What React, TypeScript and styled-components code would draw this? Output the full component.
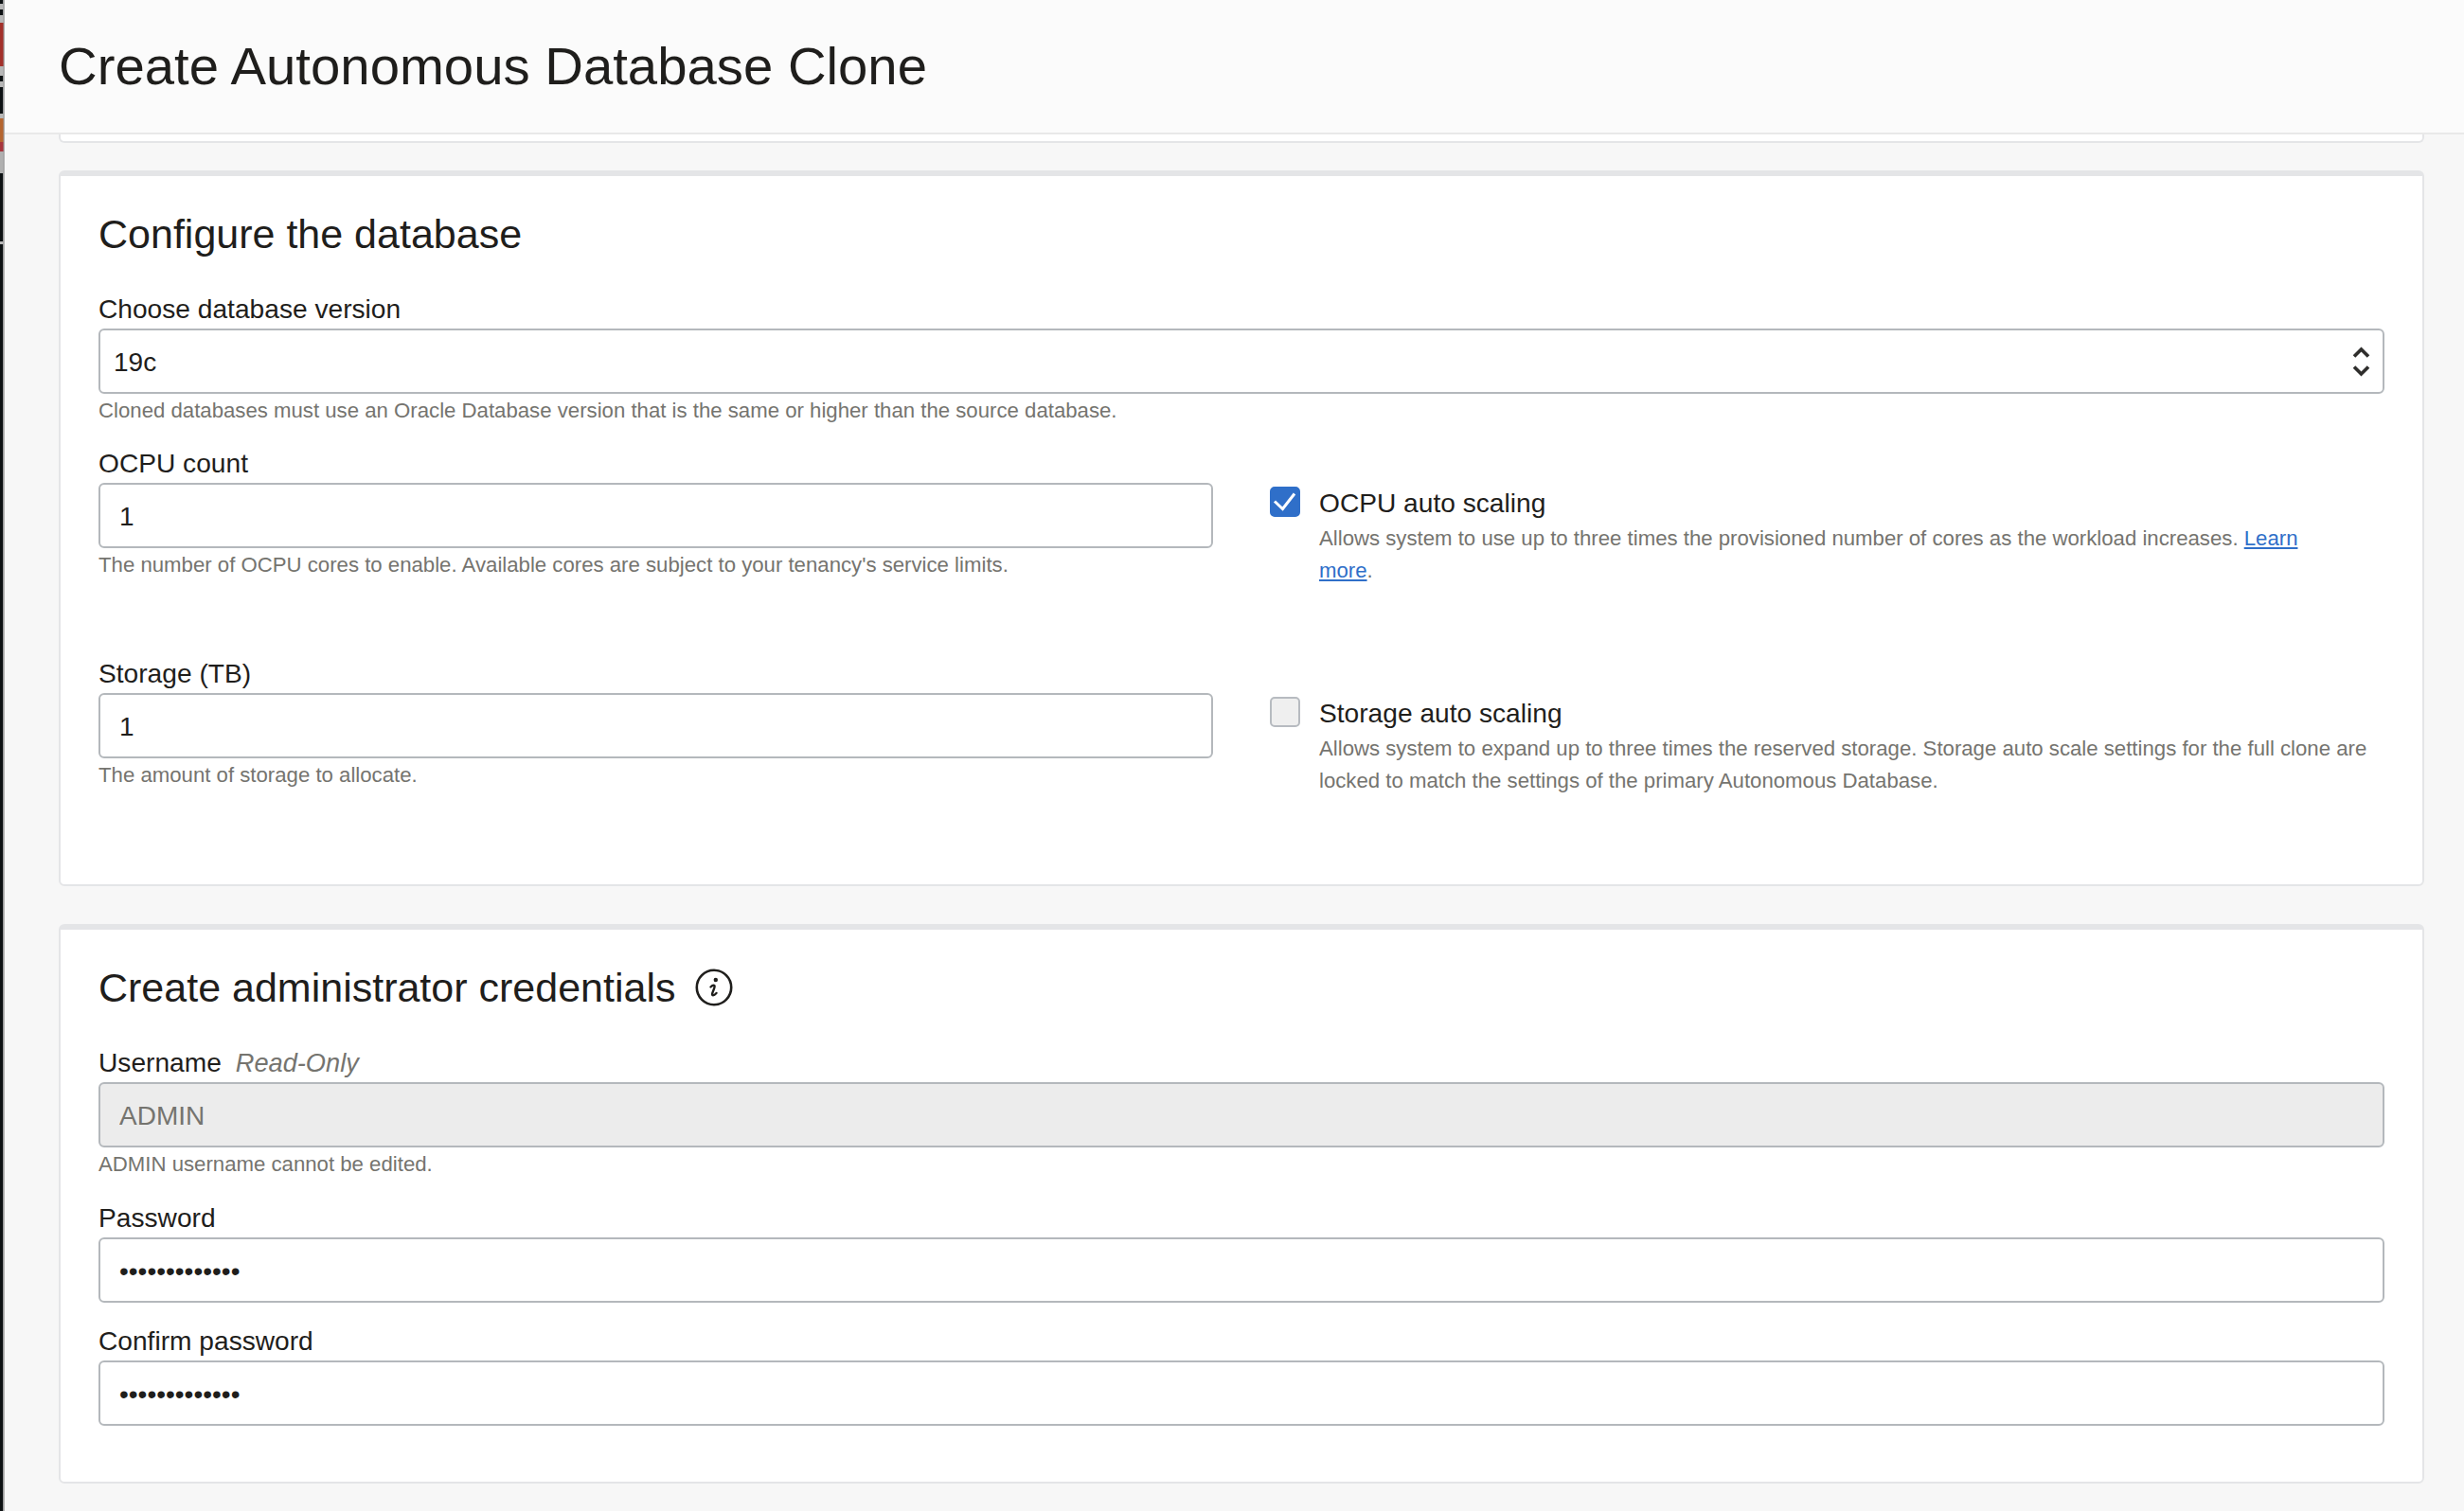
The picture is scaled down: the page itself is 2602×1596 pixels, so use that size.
import React from 'react';
import styled, { createGlobalStyle } from 'styled-components';

const GlobalStyle = createGlobalStyle`
  html, body {
    margin: 0;
    padding: 0;
    background: #f7f7f7;
    font-family: "Liberation Sans", Arial, sans-serif;
    color: #1f1e1c;
  }
  * {
    box-sizing: border-box;
  }
`;

const Shell = styled.div`
  display: flex;
  width: 2602px;
  height: 1596px;
  overflow: hidden;
`;

const EdgeStrip = styled.svg`
  flex: 0 0 5px;
  width: 5px;
  height: 1596px;
  display: block;
`;

const Main = styled.div`
  flex: 1;
  min-width: 0;
`;

const PageHeader = styled.header`
  height: 142px;
  padding-left: 57px;
  display: flex;
  align-items: center;
  background: #fbfbfb;
  border-bottom: 2px solid #e9e9e9;
`;

const PageTitle = styled.h1`
  margin: 0 0 1px;
  font-size: 56.3px;
  font-weight: 400;
  line-height: 64px;
  color: #1f1e1c;
`;

const Content = styled.main`
  padding: 0 42px 0 57px;
`;

const CardStub = styled.div`
  height: 9px;
  margin-bottom: 29px;
  background: #fff;
  border: 2px solid #e4e5e7;
  border-top: 0;
  border-radius: 0 0 6px 6px;
`;

const Card = styled.section<{ $bottom: number }>`
  margin-bottom: 40px;
  padding: 36px 40px ${({ $bottom }) => $bottom}px;
  background: #fff;
  border: 2px solid #e4e5e7;
  border-top-width: 6px;
  border-radius: 6px;
`;

const CardTitle = styled.h2`
  margin: 0 0 37px;
  display: flex;
  align-items: center;
  gap: 21px;
  font-size: 43px;
  font-weight: 400;
  line-height: 50px;
  color: #1f1e1c;
`;

const Fields = styled.div<{ $gap: number }>`
  display: flex;
  flex-direction: column;
  gap: ${({ $gap }) => $gap}px;
`;

const Field = styled.div`
  display: flex;
  flex-direction: column;
`;

const Label = styled.label`
  display: block;
  height: 36px;
  margin-bottom: 2px;
  font-size: 28.15px;
  line-height: 36px;
  color: #1f1e1c;
`;

const ReadOnlyTag = styled.span`
  margin-left: 15px;
  font-size: 27.2px;
  font-style: italic;
  color: #75746f;
`;

const TextInput = styled.input`
  display: block;
  width: 100%;
  height: 69px;
  padding: 2px 20px 0;
  font-family: inherit;
  font-size: 28px;
  color: #1f1e1c;
  background: #fff;
  border: 2px solid #b4b8bc;
  border-radius: 6px;
  outline: none;

  &:read-only.locked {
    color: #75746f;
    background: #ececec;
  }
`;

const SelectBox = styled.div`
  height: 69px;
  padding: 0 13px 0 14px;
  display: flex;
  align-items: center;
  justify-content: space-between;
  font-size: 28px;
  color: #1f1e1c;
  background: #fff;
  border: 2px solid #b4b8bc;
  border-radius: 6px;
`;

const SelectValue = styled.span`
  padding-top: 2px;
`;

const Hint = styled.p`
  height: 34px;
  margin: 0;
  font-size: 22.2px;
  line-height: 36px;
  color: #75746f;
`;

const ScaleGrid = styled.div`
  display: grid;
  grid-template-columns: 1177px 1177px;
  column-gap: 60px;
  row-gap: 74px;
`;

const ScaleOption = styled.div`
  padding-top: 42px;
  display: flex;
  gap: 20px;
  align-items: flex-start;
`;

const CheckBox = styled.span<{ $checked?: boolean }>`
  flex: 0 0 32px;
  width: 32px;
  height: 32px;
  display: flex;
  align-items: center;
  justify-content: center;
  background: ${({ $checked }) => ($checked ? '#2f6fc9' : '#efefef')};
  border: 2px solid ${({ $checked }) => ($checked ? '#2f6fc9' : '#b7bbc0')};
  border-radius: 5px;
`;

const OptionText = styled.div`
  min-width: 0;
`;

const OptionLabel = styled.div`
  height: 36px;
  margin-bottom: 2px;
  font-size: 28.15px;
  line-height: 36px;
  color: #1f1e1c;
`;

const OptionHelp = styled.p`
  margin: 0;
  font-size: 22.2px;
  line-height: 34px;
  color: #75746f;
`;

const HelpLink = styled.a`
  color: #2f6fc9;
  text-decoration: underline;
`;

const strip: Array<[number, number, string]> = [
  [4, 6, '#b8b8b8'],
  [16, 8, '#b8b8b8'],
  [24, 46, '#a3302a'],
  [70, 10, '#b8b8b8'],
  [86, 6, '#b8b8b8'],
  [120, 5, '#b8b8b8'],
  [125, 25, '#b5652f'],
  [150, 10, '#a8353c'],
  [160, 23, '#b0b0b0'],
  [255, 3, '#b8b8b8'],
];

const InfoIcon = () => (
  <svg width="40" height="40" viewBox="0 0 40 40" fill="none">
    <circle cx="20" cy="20" r="18.2" stroke="#1f1e1c" strokeWidth="2.6" />
    <circle cx="21.8" cy="12" r="2.2" fill="#1f1e1c" />
    <path
      d="M16.5 19.5c1.2-1.2 2.6-2 3.6-1.6 1 .4.5 1.8 0 3.2l-1.7 4.6c-.5 1.4-.5 2.3.3 2.5 1 .2 2.6-.9 3.8-2.2"
      stroke="#1f1e1c"
      strokeWidth="2.4"
      strokeLinecap="round"
    />
  </svg>
);

const Chevrons = () => (
  <svg width="19" height="32" viewBox="0 0 19 32" fill="none">
    <path d="M2 10.5 9.5 3 17 10.5M2 21.5 9.5 29 17 21.5" stroke="#2f2e2c" strokeWidth="3.6" />
  </svg>
);

const CheckMark = () => (
  <svg width="28" height="28" viewBox="0 0 28 28" fill="none">
    <path d="M3 13.5 11.5 21.5 24 5.5" stroke="#fff" strokeWidth="3" />
  </svg>
);

const App = () => (
  <Shell>
    <GlobalStyle />
    <EdgeStrip viewBox="0 0 5 1596" preserveAspectRatio="none">
      <rect width="3.5" height="1596" fill="#0d1113" />
      <rect x="3.5" width="1.5" height="1596" fill="#b4b4b4" />
      {strip.map(([y, height, fill]) => (
        <rect key={y} y={y} width="3.5" height={height} fill={fill} />
      ))}
    </EdgeStrip>
    <Main>
      <PageHeader>
        <PageTitle>Create Autonomous Database Clone</PageTitle>
      </PageHeader>
      <Content>
        <CardStub />

        <Card $bottom={92}>
          <CardTitle>Configure the database</CardTitle>
          <Fields $gap={22}>
            <Field>
              <Label>Choose database version</Label>
              <SelectBox>
                <SelectValue>19c</SelectValue>
                <Chevrons />
              </SelectBox>
              <Hint>Cloned databases must use an Oracle Database version that is the same or higher than the source database.</Hint>
            </Field>
            <ScaleGrid>
              <Field>
                <Label>OCPU count</Label>
                <TextInput readOnly value="1" />
                <Hint>The number of OCPU cores to enable. Available cores are subject to your tenancy's service limits.</Hint>
              </Field>
              <ScaleOption>
                <CheckBox $checked>
                  <CheckMark />
                </CheckBox>
                <OptionText>
                  <OptionLabel>OCPU auto scaling</OptionLabel>
                  <OptionHelp>
                    Allows system to use up to three times the provisioned number of cores as the workload increases. <HelpLink href="#">Learn</HelpLink>
                    <br />
                    <HelpLink href="#">more</HelpLink>.
                  </OptionHelp>
                </OptionText>
              </ScaleOption>
              <Field>
                <Label>Storage (TB)</Label>
                <TextInput readOnly value="1" />
                <Hint>The amount of storage to allocate.</Hint>
              </Field>
              <ScaleOption>
                <CheckBox />
                <OptionText>
                  <OptionLabel>Storage auto scaling</OptionLabel>
                  <OptionHelp>
                    Allows system to expand up to three times the reserved storage. Storage auto scale settings for the full clone are locked to match the settings of the primary Autonomous Database.
                  </OptionHelp>
                </OptionText>
              </ScaleOption>
            </ScaleGrid>
          </Fields>
        </Card>

        <Card $bottom={59}>
          <CardTitle>
            Create administrator credentials
            <InfoIcon />
          </CardTitle>
          <Fields $gap={23}>
            <Field>
              <Label>
                Username<ReadOnlyTag>Read-Only</ReadOnlyTag>
              </Label>
              <TextInput className="locked" readOnly value="ADMIN" />
              <Hint>ADMIN username cannot be edited.</Hint>
            </Field>
            <Field>
              <Label>Password</Label>
              <TextInput type="password" readOnly value="aaaaaaaaaaaaa" />
            </Field>
            <Field>
              <Label>Confirm password</Label>
              <TextInput type="password" readOnly value="aaaaaaaaaaaaa" />
            </Field>
          </Fields>
        </Card>
      </Content>
    </Main>
  </Shell>
);

export default App;
